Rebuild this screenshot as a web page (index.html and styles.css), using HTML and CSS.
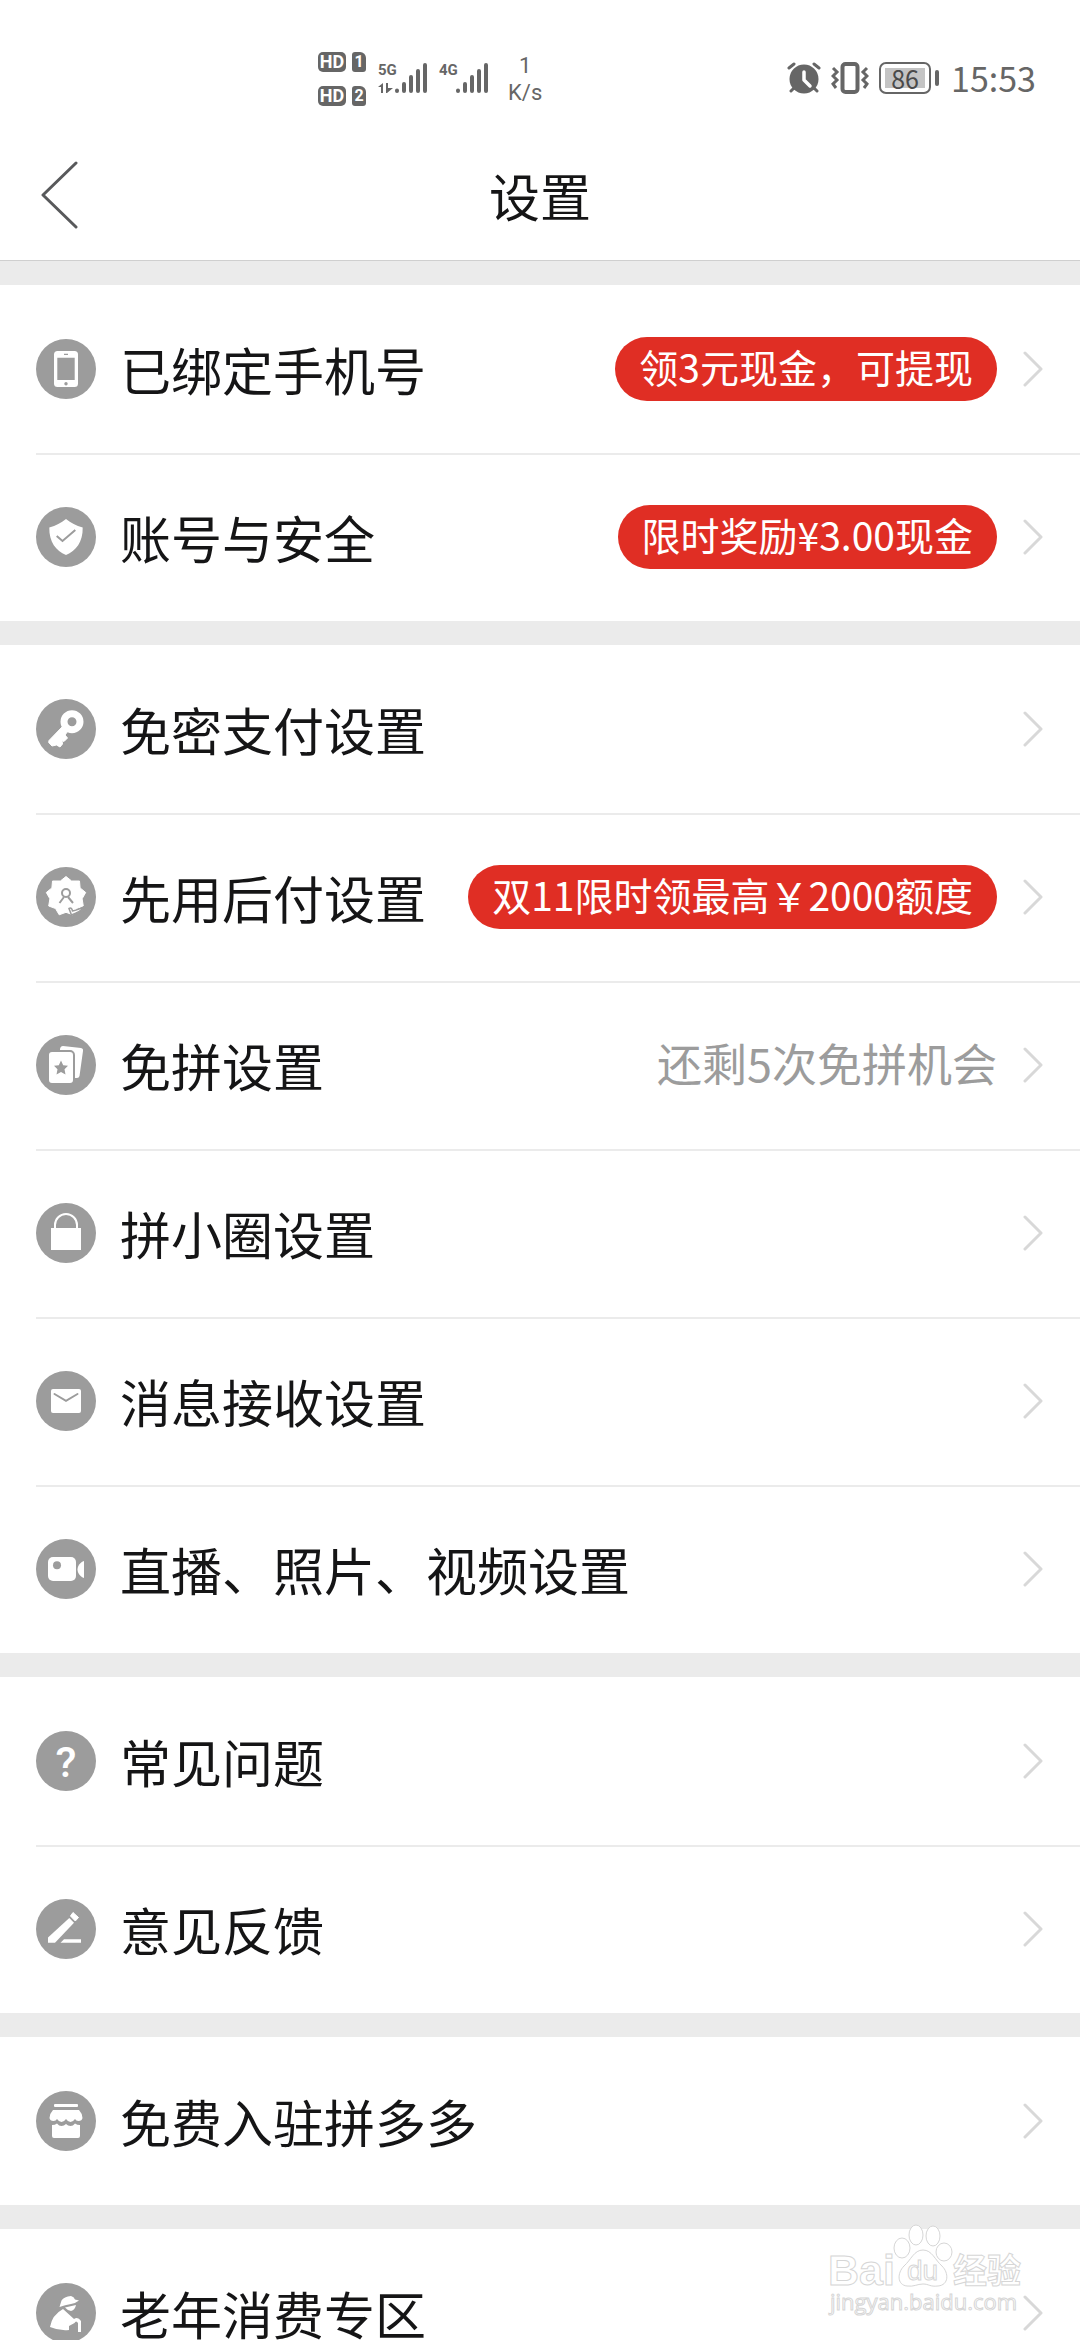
FILE: index.html
```
<!DOCTYPE html>
<html lang="zh-CN">
<head>
    <meta charset="UTF-8" />
    <meta name="viewport" content="width=device-width, initial-scale=1.0" />
    <title>设置</title>
    <link rel="stylesheet" href="styles.css">
</head>
<body>
    <!-- Shared symbols -->
    <svg class="symbols" aria-hidden="true">
        <symbol id="arrow" viewBox="0 0 20 36">
            <path d="M2 2L18 18L2 34" fill="none" stroke="#d8d8d8" stroke-width="3" stroke-linecap="round" stroke-linejoin="round" />
        </symbol>
        <symbol id="bars" viewBox="0 0 32 30">
            <path d="M2 28V27.5M9 28V21M16 28V14M23 28V8M30 28V2" fill="none" stroke="#666" stroke-width="4" stroke-linecap="round" />
        </symbol>
    </svg>

    <!-- Phone status bar -->
    <div class="status-bar">
        <div class="sims">
            <div class="sim"><span class="hd">HD</span><span class="slot">1</span></div>
            <div class="sim"><span class="hd">HD</span><span class="slot">2</span></div>
        </div>
        <div class="signal">
            <div class="net">
                <span>5G</span>
                <svg width="16" height="10" viewBox="0 0 16 10"><path d="M0 4L5 0V10H3V4ZM8 0H10V5H15L9 10H8Z" fill="#666" /></svg>
            </div>
            <svg class="bars"><use href="#bars" /></svg>
        </div>
        <div class="signal">
            <div class="net"><span>4G</span></div>
            <svg class="bars"><use href="#bars" /></svg>
        </div>
        <div class="speed"><span>1</span><span>K/s</span></div>
        <div class="status-right">
            <svg width="34" height="32" viewBox="0 0 34 32">
                <path d="M2 6L7 2M32 6L27 2M7 26L4 29M27 26L30 29" stroke="#666" stroke-width="3" stroke-linecap="round" />
                <circle cx="17" cy="17" r="14.5" fill="#666" />
                <path d="M17 10V18L23 24" fill="none" stroke="#fff" stroke-width="3.5" stroke-linecap="round" stroke-linejoin="round" />
            </svg>
            <svg width="38" height="32" viewBox="0 0 38 32">
                <rect x="11.5" y="2" width="15" height="28" rx="3" fill="none" stroke="#666" stroke-width="4" />
                <path d="M2 6L6 10L2 14L6 18L2 22L5 26M36 6L32 10L36 14L32 18L36 22L33 26" fill="none" stroke="#666" stroke-width="3" />
            </svg>
            <div class="battery"><span>86</span></div>
            <span class="clock">15:53</span>
        </div>
    </div>

    <!-- Title bar -->
    <header class="title-bar">
        <button class="back" aria-label="返回">
            <svg width="38" height="68" viewBox="0 0 38 68"><path d="M35 2L2 34L35 66" fill="none" stroke="#58595b" stroke-width="3" stroke-linecap="round" stroke-linejoin="round" /></svg>
        </button>
        <h1>设置</h1>
    </header>

    <main>
        <section class="group">
            <a class="row" href="#">
                <svg class="icon" viewBox="0 0 60 60">
                    <rect x="18" y="12" width="24" height="36" rx="3.5" fill="#fff" />
                    <path d="M21.3 18.7H38.7V41H21.3ZM28 14.7H32V16H28Z" />
                    <circle cx="30" cy="44.8" r="1.7" />
                </svg>
                <span class="label">已绑定手机号</span>
                <span class="tag">领3元现金，可提现</span>
                <svg class="arrow"><use href="#arrow" /></svg>
            </a>
            <a class="row" href="#">
                <svg class="icon" viewBox="0 0 60 60">
                    <path d="M30 12C35 16 40 18.5 46.7 20.5C47 35 40 44 30 48C20 44 13 35 13.3 20.5C20 18.5 25 16 30 12Z" fill="#fff" />
                    <path d="M20.7 29L26.5 34L39.3 23" fill="none" stroke="#9c9c9c" stroke-width="2" />
                </svg>
                <span class="label">账号与安全</span>
                <span class="tag">限时奖励¥3.00现金</span>
                <svg class="arrow"><use href="#arrow" /></svg>
            </a>
        </section>

        <section class="group">
            <a class="row" href="#">
                <svg class="icon" viewBox="0 0 60 60">
                    <circle cx="36" cy="22.7" r="8" fill="none" stroke="#fff" stroke-width="7" />
                    <path d="M27 27L32 32L29 36L31.5 39L28 42.5L26 41.5L26.500 45L24 48L20.5 46L16 47L12.7 43.5L13 41.5Z" fill="#fff" stroke="#fff" stroke-linejoin="round" />
                </svg>
                <span class="label">免密支付设置</span>
                <svg class="arrow"><use href="#arrow" /></svg>
            </a>
            <a class="row" href="#">
                <svg class="icon" viewBox="0 0 60 60">
                    <path d="M30 9.5L35.6 14H43.5L44.1 20.9L49.7 25.5L46.1 31.8L47.3 39L40.5 41.5L36.8 47.8L30 45.3L23.2 47.8L19.5 41.5L12.7 39L13.9 31.8L10.3 25.5L15.9 20.9L16.5 14H24.4Z" fill="#fff" stroke="#fff" stroke-linejoin="round" />
                    <circle cx="30" cy="26" r="4" fill="none" stroke="#9c9c9c" stroke-width="2" />
                    <path d="M28 30L23.5 36M32 30L37 36" stroke="#9c9c9c" stroke-width="2" />
                    <path d="M38 49L52 43V36L47.500 39L36.800 49Z" />
                    <path d="M33 41.500C35 40.500 36 41.500 36.500 44C41 43.500 45 41 49.500 39.500C46 43 42 45.500 35.500 48Z" fill="#fff" stroke="#9c9c9c" stroke-width="1.500" />
                </svg>
                <span class="label">先用后付设置</span>
                <span class="tag">双11限时领最高￥2000额度</span>
                <svg class="arrow"><use href="#arrow" /></svg>
            </a>
            <a class="row" href="#">
                <svg class="icon" viewBox="0 0 60 60">
                    <path d="M27 11L45 13Q47.5 13.5 47 16L43.5 41Q43 43 41 43H34L24 20V14Q24.5 11 27 11Z" fill="#fff" />
                    <rect x="12" y="16" width="26" height="33" rx="4" fill="#fff" stroke="#9c9c9c" stroke-width="2" />
                    <path d="M25 25.5L27.2 30.2L32 30.8L28.5 34.3L29.5 39.5L25 37L20.5 39.5L21.5 34.3L18 30.8L22.8 30.2Z" />
                </svg>
                <span class="label">免拼设置</span>
                <span class="hint">还剩5次免拼机会</span>
                <svg class="arrow"><use href="#arrow" /></svg>
            </a>
            <a class="row" href="#">
                <svg class="icon" viewBox="0 0 60 60">
                    <rect x="15" y="25" width="30" height="22" fill="#fff" />
                    <path d="M19 26V22A11 11 0 0 1 41 22V26" fill="none" stroke="#fff" stroke-width="2" />
                </svg>
                <span class="label">拼小圈设置</span>
                <svg class="arrow"><use href="#arrow" /></svg>
            </a>
            <a class="row" href="#">
                <svg class="icon" viewBox="0 0 60 60">
                    <rect x="15" y="18" width="30" height="24" rx="2" fill="#fff" />
                    <path d="M18.5 23L30 29.8L41.5 23" fill="none" stroke="#9c9c9c" stroke-width="2" stroke-linecap="round" />
                </svg>
                <span class="label">消息接收设置</span>
                <svg class="arrow"><use href="#arrow" /></svg>
            </a>
            <a class="row" href="#">
                <svg class="icon" viewBox="0 0 60 60">
                    <rect x="12" y="18" width="28" height="24" rx="5" fill="#fff" />
                    <circle cx="21" cy="26.3" r="4" />
                    <path d="M48 22V39C44.5 38 41.5 34 41.5 30.5C41.5 27 44.5 23 48 22Z" fill="#fff" />
                </svg>
                <span class="label">直播、照片、视频设置</span>
                <svg class="arrow"><use href="#arrow" /></svg>
            </a>
        </section>

        <section class="group">
            <a class="row" href="#">
                <svg class="icon" viewBox="0 0 60 60">
                    <text class="icon-text" x="30" y="46" text-anchor="middle">?</text>
                </svg>
                <span class="label">常见问题</span>
                <svg class="arrow"><use href="#arrow" /></svg>
            </a>
            <a class="row" href="#">
                <svg class="icon" viewBox="0 0 60 60">
                    <path d="M33.3 19L38 23.7L19 43.7H12V38.5Z" fill="#fff" />
                    <path d="M37 13.5L42.5 18.5L39.3 22L34.5 17Z" fill="#fff" stroke="#fff" stroke-linejoin="round" />
                    <path d="M28 40.3H45V43.7H24.5Z" fill="#fff" />
                </svg>
                <span class="label">意见反馈</span>
                <svg class="arrow"><use href="#arrow" /></svg>
            </a>
        </section>

        <section class="group">
            <a class="row" href="#">
                <svg class="icon" viewBox="0 0 60 60">
                    <rect x="18" y="13" width="24" height="3" rx="1" fill="#fff" />
                    <path d="M17 19H43Q46 22 46.5 27Q46 30 42.5 30Q40 30 39 28Q37 31 34.5 31Q32 31 30 28Q28 31 25.5 31Q23 31 21 28Q20 30 17.5 30Q14 30 13.5 27Q14 22 17 19Z" fill="#fff" />
                    <path d="M16 34Q19 34 21 32.5Q23 35 25.5 35Q28 35 30 33Q32 35 34.5 35Q37 35 39 32.5Q41 34 44 34V45Q44 47 42 47H18Q16 47 16 45Z" fill="#fff" />
                </svg>
                <span class="label">免费入驻拼多多</span>
                <svg class="arrow"><use href="#arrow" /></svg>
            </a>
        </section>

        <section class="group">
            <a class="row" href="#">
                <svg class="icon" viewBox="0 0 60 60">
                    <path d="M23.5 24L25.5 17.5Q28 13.5 35 13Q38 13.5 39 16.5L43 17.5Q40 20 35 21Q29 22 23.5 24Z" fill="#fff" />
                    <path d="M29 24.5L40 22Q39 27 35 28Q32 28 29 24.5Z" fill="#fff" />
                    <path d="M27 26L38 36Q42 33.5 45 38V49H42V40Q40 37 38.5 40L33 43V47Q23 48 14 44Q16 32 27 26Z" fill="#fff" />
                </svg>
                <span class="label">老年消费专区</span>
                <svg class="arrow"><use href="#arrow" /></svg>
            </a>
        </section>
    </main>

    <!-- Watermark over the bottom corner -->
    <svg class="watermark" width="200" height="100" viewBox="0 0 200 100">
        <text class="mark-bold" x="2" y="61">Bai</text>
        <ellipse cx="76" cy="24" rx="8" ry="10" />
        <ellipse cx="90" cy="11" rx="7" ry="10" />
        <ellipse cx="107" cy="12" rx="7" ry="10" />
        <ellipse cx="118" cy="28" rx="8" ry="9" />
        <path d="M97 26C106 26 109 36 116 42C123 49 123 61 112 62C104 63 103 60 97 60C91 60 88 63 81 62C71 61 71 49 78 42C85 36 88 26 97 26Z" />
        <text class="mark-du" x="81" y="56">du</text>
        <text class="mark-cn" x="127" y="59">经验</text>
        <text class="mark-url" x="4" y="86">jingyan.baidu.com</text>
    </svg>
</body>
</html>
```
FILE: styles.css
```
/* === Basic Reset & Font === */
* {
    box-sizing: border-box;
}

body, h1 {
    margin: 0;
    padding: 0;
}

body {
    position: relative;
    height: 100vh;
    overflow: hidden;
    font-family: "Noto Sans CJK SC", sans-serif;
    background: #fff;
    color: #151516;
}

svg {
    flex: none;
}

.symbols {
    position: absolute;
    width: 0;
    height: 0;
}
/* === Status Bar === */
.status-bar {
    display: flex;
    align-items: flex-start;
    height: 130px;
    padding: 52px 44px 0 318px;
    color: #666;
}

.sims {
    display: flex;
    flex-direction: column;
    gap: 14px;
}

.sim {
    display: flex;
    gap: 6px;
}

.hd, .slot {
    height: 20px;
    border-radius: 5px;
    background: #666;
    color: #fff;
    font: bold 18px/20px Roboto, sans-serif;
    text-align: center;
}

.hd {
    width: 28px;
}

.slot {
    width: 14px;
    border-radius: 3px 6px 3px 3px;
    font-size: 16px;
}

.signal {
    display: flex;
    padding-top: 11px;
    margin-left: 12px;
}

.net {
    display: flex;
    flex-direction: column;
    gap: 6px;
    width: 17px;
    font: bold 15px/14px Roboto, sans-serif;
}

.bars {
    width: 32px;
    height: 30px;
}

.speed {
    display: flex;
    flex-direction: column;
    align-items: center;
    margin-left: 20px;
    font: 22px/27px Roboto, sans-serif;
}

.status-right {
    display: flex;
    align-items: center;
    gap: 10px;
    height: 52px;
    margin-left: auto;
}

.battery {
    position: relative;
    width: 52px;
    height: 32px;
    padding: 4px;
    margin-right: 10px;
    border: 2px solid #666;
    border-radius: 7px;
    font-size: 25px;
    line-height: 20px;
    text-align: center;
}

.battery span {
    display: block;
    background: #c4c4c4;
    color: #4a4a4a;
}

/* battery tip */
.battery::after {
    content: "";
    position: absolute;
    top: 6px;
    right: -10px;
    width: 4px;
    height: 16px;
    border-radius: 2px;
    background: #666;
}

.clock {
    font-size: 34px;
    line-height: 34px;
}
/* === Title Bar === */
.title-bar {
    display: grid;
    grid-template-columns: 120px 1fr 120px;
    align-items: center;
    height: 131px;
    border-bottom: 1px solid #cfcfcf;
}

.title-bar h1 {
    font-size: 51px;
    font-weight: 400;
    line-height: 60px;
    text-align: center;
}

.back {
    display: flex;
    padding: 0 41px;
    border: none;
    background: none;
    cursor: pointer;
}
/* === Setting Groups === */
.group {
    border-top: 24px solid #ebebeb;
}

.row {
    position: relative;
    display: flex;
    align-items: center;
    height: 168px;
    padding: 0 37px 0 36px;
    color: inherit;
    text-decoration: none;
}

/* divider, inset on the left */
.row + .row::before {
    content: "";
    position: absolute;
    top: 0;
    left: 36px;
    right: 0;
    height: 2px;
    background: #ebebeb;
}

.icon {
    width: 60px;
    height: 60px;
    border-radius: 50%;
    background: #9c9c9c;
    fill: #9c9c9c;
}

.icon-text {
    fill: #fff;
    font: 500 43px Roboto, sans-serif;
}

.label {
    flex: 1;
    margin-left: 24px;
    font-size: 51px;
    line-height: 60px;
    white-space: nowrap;
}

.tag {
    height: 64px;
    padding: 0 24px;
    border-radius: 32px;
    background: #e02e24;
    color: #fff;
    font-size: 39px;
    line-height: 58px;
    white-space: nowrap;
}

.hint {
    padding-bottom: 4px;
    color: #9c9c9c;
    font-size: 45px;
    line-height: 60px;
    white-space: nowrap;
}

.arrow {
    width: 20px;
    height: 36px;
    margin-left: 26px;
}
/* === Watermark === */
.watermark {
    position: absolute;
    right: 54px;
    bottom: 16px;
    fill: #fff;
    stroke: #d6d6d6;
    stroke-width: 1;
}

.mark-bold {
    font: bold 43px "Liberation Sans", sans-serif;
}

.mark-du {
    font: 28px "Liberation Sans", sans-serif;
}

.mark-cn {
    font-size: 34px;
    font-weight: 700;
}

.mark-url {
    font: 22px "Open Sans", sans-serif;
}
```
